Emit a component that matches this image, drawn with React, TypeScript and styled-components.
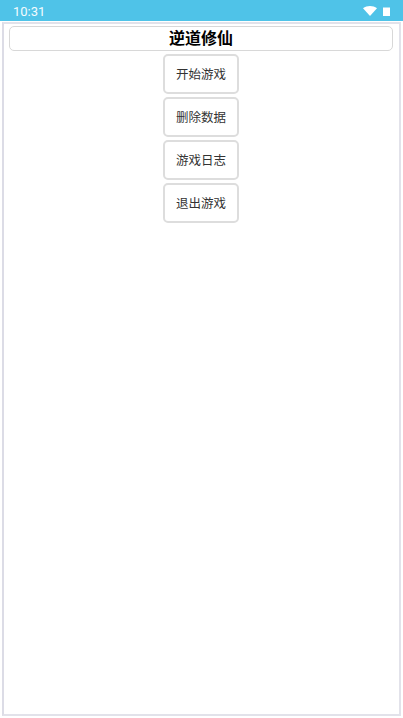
import React from "react";
import styled, { createGlobalStyle } from "styled-components";

const Global = createGlobalStyle`
  html, body { margin: 0; padding: 0; height: 100%; background: #fff; }
  #root { height: 100%; }
  * { box-sizing: border-box; }
`;

const Screen = styled.div`
  width: 403px;
  height: 718px;
  display: flex;
  flex-direction: column;
  overflow: hidden;
  font-family: "Roboto", "Noto Sans CJK SC", sans-serif;
`;

const StatusBar = styled.div`
  height: 21px;
  flex: none;
  background: #4fc3e8;
  display: flex;
  align-items: center;
  justify-content: space-between;
  padding: 2px 13px 0 13px;
  color: #f4fbfe;
  font-size: 13px;
`;

const StatusIcons = styled.div`
  display: flex;
  align-items: flex-end;
  gap: 6px;
  padding-bottom: 2px;
`;

const Frame = styled.div`
  flex: 1;
  margin: 1px 2px 2px 2px;
  border: 2px solid #e2e2ea;
  border-left-color: #dcdce6;
  padding: 2px 6px 2px 5px;
  display: flex;
  flex-direction: column;
  align-items: center;
`;

const Title = styled.div`
  width: 100%;
  height: 25px;
  border: 1px solid #d8d8d8;
  border-radius: 5px;
  font-weight: 700;
  font-size: 16px;
  line-height: 23px;
  text-align: center;
  color: #000;
`;

const Menu = styled.div`
  display: flex;
  flex-direction: column;
  gap: 3px;
  margin-top: 3px;
`;

const MenuButton = styled.button`
  width: 76px;
  height: 40px;
  background: #fff;
  border: 2px solid #dddddd;
  border-radius: 5px;
  padding: 0 0 2px;
  font-size: 12.5px;
  color: #333;
  font-family: "Roboto", "Noto Sans CJK SC", sans-serif;
`;

const items = ["开始游戏", "删除数据", "游戏日志", "退出游戏"];

export default function App() {
  return (
    <Screen>
      <Global />
      <StatusBar>
        <span>10:31</span>
        <StatusIcons>
          <svg width="14" height="10" viewBox="0 0 14 10">
            <path d="M0 2.3 C4 -0.7 10 -0.7 14 2.3 L7 10 Z" fill="#fff" />
          </svg>
          <svg width="7" height="9" viewBox="0 0 7 9">
            <path d="M0 0.5 H7 V9 H0 Z" fill="#fff" />
          </svg>
        </StatusIcons>
      </StatusBar>
      <Frame>
        <Title>逆道修仙</Title>
        <Menu>
          {items.map((t) => (
            <MenuButton key={t}>{t}</MenuButton>
          ))}
        </Menu>
      </Frame>
    </Screen>
  );
}
